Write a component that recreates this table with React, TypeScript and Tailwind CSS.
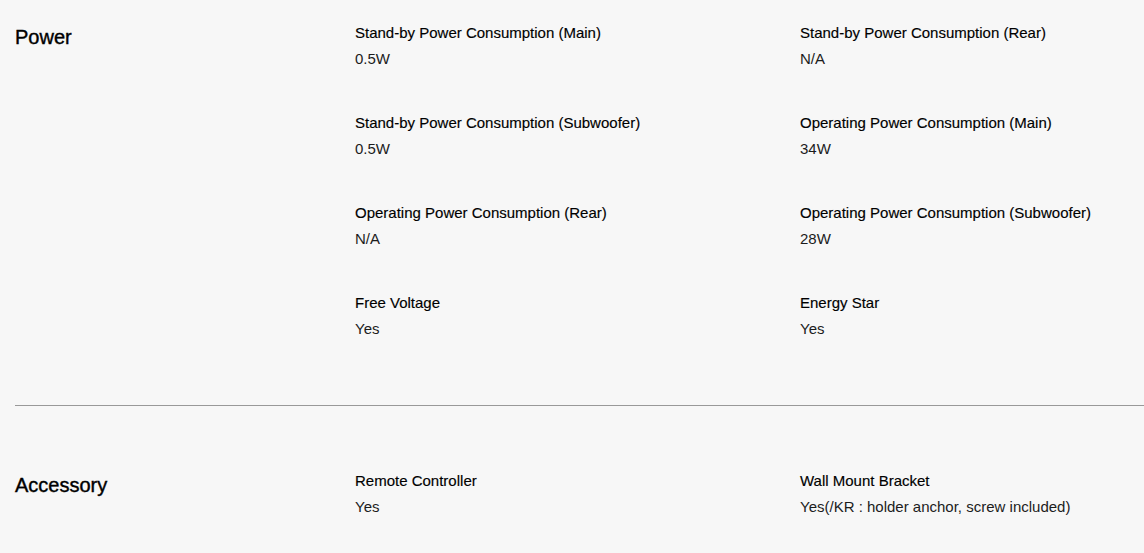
import React from "react";

type Spec = { label: string; value: string };

const power: Spec[] = [
  { label: "Stand-by Power Consumption (Main)", value: "0.5W" },
  { label: "Stand-by Power Consumption (Rear)", value: "N/A" },
  { label: "Stand-by Power Consumption (Subwoofer)", value: "0.5W" },
  { label: "Operating Power Consumption (Main)", value: "34W" },
  { label: "Operating Power Consumption (Rear)", value: "N/A" },
  { label: "Operating Power Consumption (Subwoofer)", value: "28W" },
  { label: "Free Voltage", value: "Yes" },
  { label: "Energy Star", value: "Yes" },
];

const accessory: Spec[] = [
  { label: "Remote Controller", value: "Yes" },
  { label: "Wall Mount Bracket", value: "Yes(/KR : holder anchor, screw included)" },
];

function Section({ title, items }: { title: string; items: Spec[] }) {
  return (
    <div className="flex">
      <div className="w-[340px] shrink-0">
        <h3 className="mt-[2px] text-[20px] leading-[24px] font-normal text-[#000] [-webkit-text-stroke:0.4px_#000]">
          {title}
        </h3>
      </div>
      <div className="grid grid-cols-[445px_1fr] gap-y-[44px]">
        {items.map((it) => (
          <div key={it.label} className="flex flex-col gap-[6px]">
            <div className="text-[15px] leading-[20px] text-[#000] [-webkit-text-stroke:0.15px_#000]">{it.label}</div>
            <div className="text-[15px] leading-[20px] text-[#1c1c1c]">{it.value}</div>
          </div>
        ))}
      </div>
    </div>
  );
}

export default function App() {
  return (
    <div
      className="min-h-[553px] w-full bg-[#f7f7f7] pl-[15px]"
      style={{ fontFamily: '"Liberation Sans", Arial, sans-serif' }}
    >
      <div className="pt-[23px] pb-[66px]">
        <Section title="Power" items={power} />
      </div>
      <div className="h-px bg-[#999]" />
      <div className="pt-[65px] pb-[30px]">
        <Section title="Accessory" items={accessory} />
      </div>
    </div>
  );
}
